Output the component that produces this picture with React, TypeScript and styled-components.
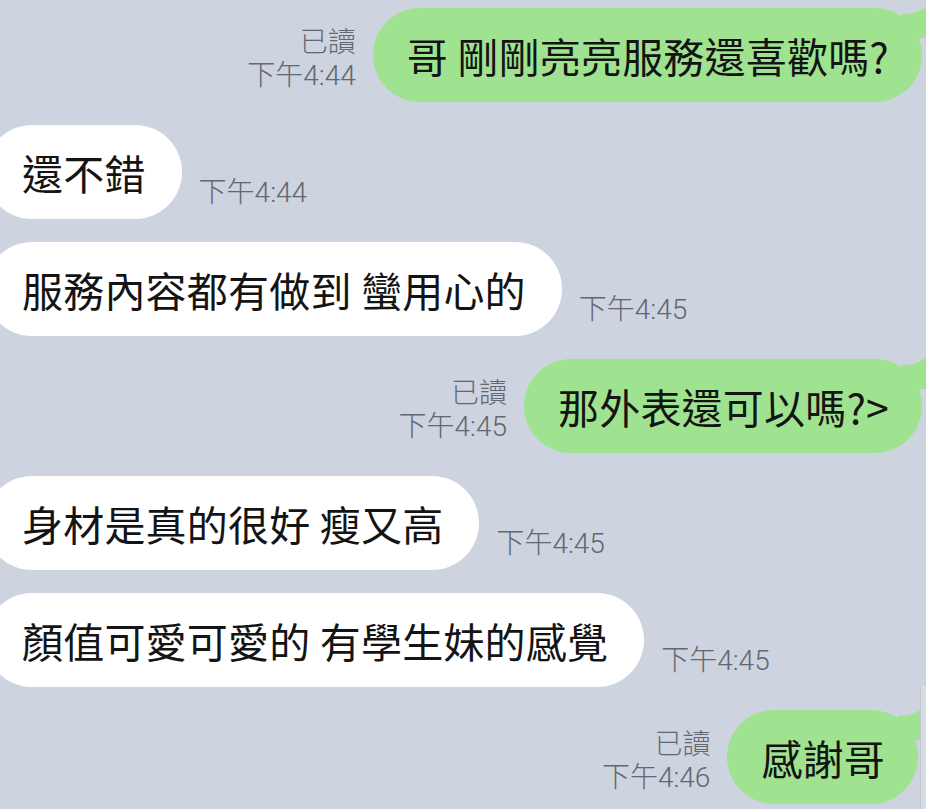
import styled, { createGlobalStyle } from "styled-components";

type Msg = {
  mine: boolean;
  text: string;
  time: string;
  shift?: number;
};

const messages: Msg[] = [
  { mine: true, text: "哥 剛剛亮亮服務還喜歡嗎?", time: "下午4:44" },
  { mine: false, text: "還不錯", time: "下午4:44" },
  { mine: false, text: "服務內容都有做到 蠻用心的", time: "下午4:45" },
  { mine: true, text: "那外表還可以嗎?>", time: "下午4:45" },
  { mine: false, text: "身材是真的很好 瘦又高", time: "下午4:45" },
  { mine: false, text: "顏值可愛可愛的 有學生妹的感覺", time: "下午4:45" },
  { mine: true, text: "感謝哥", time: "下午4:46", shift: 4 },
];

export default function App() {
  return (
    <>
      <GlobalStyle />
      <S.Screen>
        {messages.map((m, i) => (
          <S.Row key={i} $mine={m.mine} $shift={m.shift ?? 0}>
            {m.mine ? (
              <>
                <S.Meta $mine>
                  <span>已讀</span>
                  <span>{m.time}</span>
                </S.Meta>
                <S.Bubble $mine>{m.text}</S.Bubble>
              </>
            ) : (
              <>
                <S.Bubble $mine={false}>{m.text}</S.Bubble>
                <S.Meta $mine={false}>
                  <span>{m.time}</span>
                </S.Meta>
              </>
            )}
          </S.Row>
        ))}
        <S.ScrollStrip />
      </S.Screen>
    </>
  );
}

const GlobalStyle = createGlobalStyle`
  html, body {
    margin: 0;
    padding: 0;
    background: #cdd4df;
  }
  * {
    box-sizing: border-box;
  }
`;

const S = {
  Screen: styled.div`
    position: relative;
    width: 926px;
    height: 809px;
    overflow: hidden;
    display: flex;
    flex-direction: column;
    gap: 23px;
    padding-top: 8px;
    background: #cdd4df;
    font-family: "Noto Sans CJK TC", "Noto Sans", sans-serif;
  `,

  Row: styled.div<{ $mine: boolean; $shift: number }>`
    display: flex;
    align-items: flex-end;
    justify-content: ${(p) => (p.$mine ? "flex-end" : "flex-start")};
    gap: 17px;
    padding-right: ${(p) => (p.$mine ? 4 + p.$shift : 0)}px;
  `,

  Bubble: styled.div<{ $mine: boolean }>`
    position: relative;
    height: 94px;
    display: flex;
    align-items: center;
    padding: ${(p) => (p.$mine ? "0 33px 0 34px" : "0 36px 0 37px")};
    margin-left: ${(p) => (p.$mine ? 0 : -15)}px;
    border-radius: 47px;
    background: ${(p) => (p.$mine ? "#9fe390" : "#ffffff")};
    color: #141414;
    font-size: 41px;
    letter-spacing: 0.2px;
    line-height: 1;
    white-space: nowrap;

    ${(p) =>
      p.$mine &&
      `
      &::after {
        content: "";
        position: absolute;
        top: -4px;
        right: -10px;
        width: 30px;
        height: 34px;
        background: #9fe390;
        clip-path: path("M0 10 Q14 10 22 4 Q28 0 30 2 Q24 14 26 34 L0 34 Z");
      }
    `}
  `,

  Meta: styled.div<{ $mine: boolean }>`
    display: flex;
    flex-direction: column;
    align-items: ${(p) => (p.$mine ? "flex-end" : "flex-start")};
    margin-bottom: 10px;
    color: #626872;
    font-family: "Roboto", "Noto Sans CJK TC", sans-serif;
    font-size: 28px;
    font-weight: 300;
    line-height: 33px;
  `,

  ScrollStrip: styled.div`
    position: absolute;
    right: 0;
    top: 686px;
    width: 6px;
    bottom: 0;
    background: #d8dce4;
    border-left: 1px solid #c4c9d3;
  `,
};
